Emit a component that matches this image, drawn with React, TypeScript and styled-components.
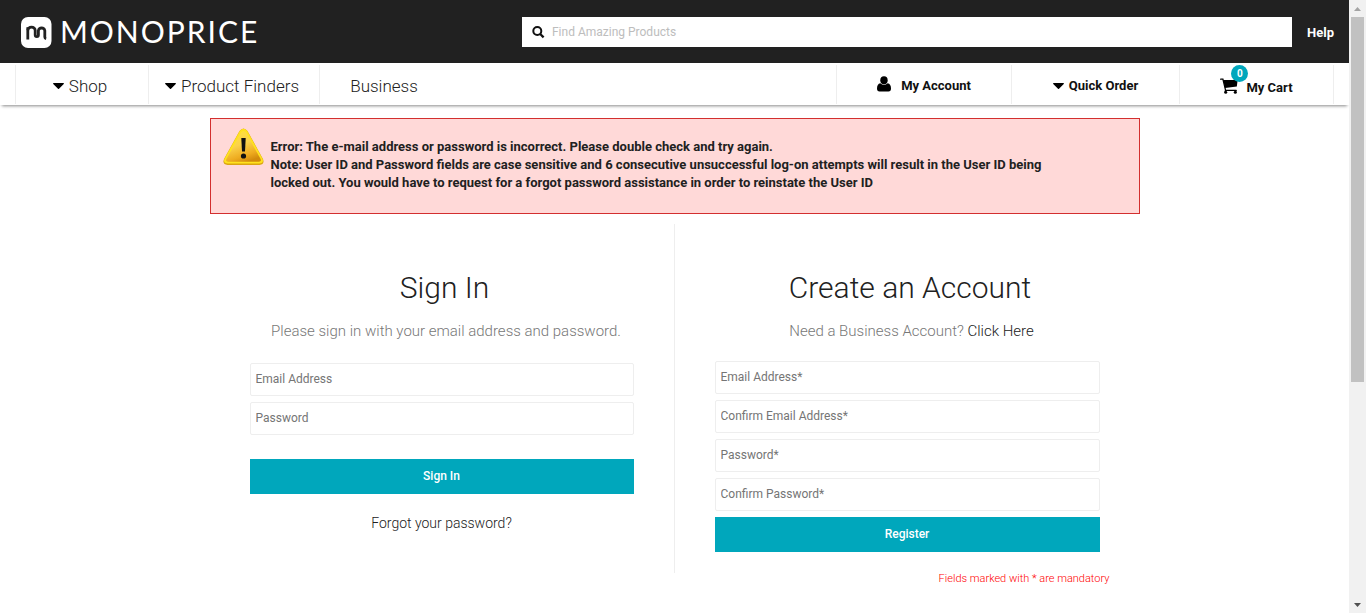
import React from "react";
import styled, { createGlobalStyle } from "styled-components";

const Global = createGlobalStyle`
  *, *::before, *::after { box-sizing: border-box; }
  body {
    margin: 0;
    background: #fff;
    color: #212121;
    font-family: Roboto, "Liberation Sans", sans-serif;
    font-size: 13px;
    line-height: 18px;
  }
  a { color: inherit; text-decoration: none; }
  h1, h2, p { margin: 0; }
`;

const Window = styled.div`
  display: grid;
  grid-template-columns: minmax(0, 1fr) 17px;
  height: 100vh;
  overflow: hidden;
`;

const Page = styled.div`
  min-width: 0;
`;

const TopBar = styled.header`
  display: flex;
  align-items: center;
  gap: 15px;
  height: 63px;
  padding: 0 15px 0 21px;
  background: #212121;
  color: #fff;
`;

const Logo = styled.a`
  display: flex;
  align-items: center;
  gap: 8px;
  margin-right: auto;
  font-family: Lato, sans-serif;
  font-size: 30px;
  line-height: 31px;
  letter-spacing: 2px;
`;

const Search = styled.form`
  display: flex;
  align-items: center;
  gap: 7px;
  flex: 0 0 58.65%;
  height: 30px;
  margin-top: 1px;
  padding-left: 10px;
  background: #fff;
`;

const SearchInput = styled.input`
  flex: 1;
  border: 0;
  outline: 0;
  padding: 0;
  background: transparent;
  font: inherit;
  font-size: 12px;
  color: #212121;
  &::placeholder { color: #bdbdbd; opacity: 1; }
`;

const HelpLink = styled.a`
  padding-top: 2px;
  font-weight: 700;
`;

const Nav = styled.nav`
  display: flex;
  justify-content: space-between;
  height: 42px;
  padding: 2px 15px 1px;
  background: #fff;
  box-shadow: 0 3px 3px -2px #888;
`;

const NavGroup = styled.div`
  display: flex;
`;

const MenuLink = styled.a<{ $w: number }>`
  display: flex;
  align-items: center;
  justify-content: center;
  gap: 5px;
  width: ${(p) => p.$w}px;
  padding: 3px 4px 0 0;
  border-left: 1px solid #eee;
  font-size: 17px;
  font-weight: 300;
`;

const ToolLink = styled(MenuLink)<{ $gap?: number }>`
  gap: ${(p) => p.$gap ?? 5}px;
  padding: 2px 0 0;
  font-size: 13px;
  font-weight: 700;
  color: #111;
  &:last-child { border-right: 1px solid #eee; }
`;

const CartIcon = styled.span`
  position: relative;
  display: flex;
`;

const CartLabel = styled.span`
  padding-top: 4px;
`;

const Badge = styled.span`
  position: absolute;
  top: -13px;
  right: -10px;
  width: 17px;
  height: 17px;
  border-radius: 50%;
  background: #00a7bc;
  color: #fff;
  font-size: 10px;
  line-height: 17px;
  text-align: center;
`;

const Main = styled.main`
  width: 930px;
  max-width: 100%;
  margin: 0 auto;
  padding-top: 13px;
`;

const Alert = styled.section`
  display: flex;
  align-items: flex-start;
  gap: 7px;
  min-height: 96px;
  padding: 9px 80px 8px 12px;
  border: 1px solid #d32f2f;
  background: #ffd9d8;
  font-weight: 700;
  svg { flex-shrink: 0; }
`;

const AlertText = styled.div`
  padding-top: 10px;
`;

const Columns = styled.div`
  display: grid;
  grid-template-columns: 1fr 1fr;
  align-items: start;
  margin-top: 10px;
`;

const Panel = styled.section<{ $divided?: boolean }>`
  min-height: 349px;
  padding: 44px 40px 0;
  border-right: ${(p) => (p.$divided ? "1px solid #eee" : "0")};
`;

const Title = styled.h1`
  padding-left: 6px;
  font-size: 30px;
  line-height: 40px;
  font-weight: 300;
  text-align: center;
`;

const Lead = styled.p`
  margin-top: 12px;
  padding-left: 9px;
  font-size: 15px;
  line-height: 22px;
  font-weight: 300;
  color: #777;
  text-align: center;
  a { color: #212121; }
`;

const Form = styled.form<{ $top: number }>`
  display: flex;
  flex-direction: column;
  gap: 6px;
  margin-top: ${(p) => p.$top}px;
`;

const Field = styled.input`
  height: 33px;
  padding: 0 5px 2px;
  border: 1px solid #eee;
  border-radius: 2px;
  font: inherit;
  font-size: 12px;
  color: #212121;
  &::placeholder { color: #757575; opacity: 1; }
`;

const Submit = styled.button<{ $spaced?: boolean }>`
  height: 35px;
  margin-top: ${(p) => (p.$spaced ? 18 : 0)}px;
  padding: 0 0 2px;
  border: 0;
  background: #00a7bc;
  color: #fff;
  font: inherit;
  font-size: 12px;
  font-weight: 500;
`;

const Forgot = styled.p`
  margin-top: 20px;
  font-size: 14px;
  font-weight: 300;
  text-align: center;
`;

const Mandatory = styled.p`
  margin: 18px -10px 0 0;
  font-size: 11px;
  font-weight: 300;
  color: #f00;
  text-align: right;
`;

const Scrollbar = styled.div`
  display: flex;
  flex-direction: column;
  align-items: center;
  justify-content: space-between;
  background: #f1f1f1;
`;

const ScrollEnd = styled.div`
  display: flex;
  align-items: center;
  justify-content: center;
  height: 17px;
`;

const Track = styled.div`
  flex: 1;
  width: 13px;
`;

const Thumb = styled.div`
  height: 63%;
  background: #c1c1c1;
`;

const Caret = () => (
  <svg width="11" height="6" viewBox="0 0 11 6" aria-hidden="true">
    <path d="M0 .8Q0 0 .8 0h9.4q.8 0 .8.8L6 5.7q-.5.5-1 0z" fill="#000" />
  </svg>
);

const LogoMark = () => (
  <svg width="31" height="33" viewBox="0 -2 31 33" aria-hidden="true">
    <rect width="30.500" height="31" rx="7" fill="#fff" />
    <path
      d="M6.800 22.500V13.500a3.700 3.300 0 0 1 7.400 0V18a1.600 1.600 0 0 0 3.200 0v-4.500a3.300 3.300 0 0 1 6.400 0V20q0 1.300 1.400 1.600"
      fill="none"
      stroke="#212121"
      strokeWidth="2.800"
      strokeLinejoin="round"
    />
    <path d="M5.400 10.200h2.800v3H5.400z" fill="#212121" />
  </svg>
);

const SearchIcon = () => (
  <svg width="13" height="13" viewBox="0 0 13 13" aria-hidden="true">
    <circle cx="5.300" cy="5" r="4" fill="none" stroke="#111" strokeWidth="2" />
    <path d="M8.200 8l3.400 3.400" stroke="#111" strokeWidth="2.300" />
  </svg>
);

const UserIcon = () => (
  <svg width="14" height="20" viewBox="0 0 14 20" aria-hidden="true">
    <ellipse cx="7" cy="4.200" rx="3.700" ry="4" />
    <path d="M3.300 7.200Q7 10.400 10.700 7.200 14 7.800 14 12.600 14 15.500 11.500 15.500h-9Q0 15.500 0 12.600 0 7.800 3.300 7.200z" />
  </svg>
);

const Cart = () => (
  <svg width="18" height="16" viewBox="0 0 18 16" aria-hidden="true">
    <path d="M.6 1.200h2.300l2.700 11.200h10.600" fill="none" stroke="#000" strokeWidth="1.300" strokeLinecap="round" />
    <path d="M3.300 2H17.600L16.800 8.600 5 10z" />
    <path d="M5.200 12.400v2M15.800 12.400v2" stroke="#000" strokeWidth="1" />
    <circle cx="5.700" cy="14.300" r="1.500" />
    <circle cx="15.300" cy="14.300" r="1.500" />
  </svg>
);

const Warning = () => (
  <svg width="41" height="38" viewBox="0 0 41 38" role="img" aria-label="Warning">
    <defs>
      <linearGradient id="gold" x1="0.200" y1="0" x2="0.600" y2="1">
        <stop offset="0" stopColor="#ffe23c" />
        <stop offset="0.450" stopColor="#fbd24b" />
        <stop offset="0.800" stopColor="#eeab1f" />
        <stop offset="1" stopColor="#d28a0c" />
      </linearGradient>
    </defs>
    <path d="M16.500 3Q20.500-2 24.500 3L40 31Q42 36.500 36.500 37H4.500Q-1 36.500 1 31z" fill="#dba510" />
    <path d="M16.700 3Q20.500-1.500 24.300 3L39.600 31Q41 35.500 36 35.500H5Q0 35.500 1.400 31z" fill="#ffe21f" />
    <path d="M18 4.500Q20.500 1.500 23 4.500L37.600 31Q38.500 33.500 36 33.800H5Q2.500 33.500 3.400 31z" fill="url(#gold)" />
    <path d="M18.300 10h4.400l-.7 13.500h-3z" fill="#111" />
    <circle cx="20.500" cy="28" r="2.600" fill="#111" />
  </svg>
);

export default function App() {
  return (
    <Window>
      <Global />
      <Page>
        <TopBar>
          <Logo href="#">
            <LogoMark />
            MONOPRICE
          </Logo>
          <Search>
            <SearchIcon />
            <SearchInput aria-label="Search" placeholder="Find Amazing Products" />
          </Search>
          <HelpLink href="#">Help</HelpLink>
        </TopBar>
        <Nav>
          <NavGroup>
            <MenuLink href="#" $w={133}><Caret />Shop</MenuLink>
            <MenuLink href="#" $w={171}><Caret />Product Finders</MenuLink>
            <MenuLink href="#" $w={133}>Business</MenuLink>
          </NavGroup>
          <NavGroup>
            <ToolLink href="#" $w={175} $gap={10}><UserIcon />My Account</ToolLink>
            <ToolLink href="#" $w={168}><Caret />Quick Order</ToolLink>
            <ToolLink href="#" $w={155} $gap={8}>
              <CartIcon><Cart /><Badge>0</Badge></CartIcon>
              <CartLabel>My Cart</CartLabel>
            </ToolLink>
          </NavGroup>
        </Nav>
        <Main>
          <Alert role="alert">
            <Warning />
            <AlertText>
              <p>Error: The e-mail address or password is incorrect. Please double check and try again.</p>
              <p>
                Note: User ID and Password fields are case sensitive and 6 consecutive unsuccessful log-on attempts will result in the User ID being
                <br />
                locked out. You would have to request for a forgot password assistance in order to reinstate the User ID
              </p>
            </AlertText>
          </Alert>
          <Columns>
            <Panel $divided>
              <Title>Sign In</Title>
              <Lead>Please sign in with your email address and password.</Lead>
              <Form $top={21}>
                <Field type="email" aria-label="Email Address" placeholder="Email Address" />
                <Field type="password" aria-label="Password" placeholder="Password" />
                <Submit type="button" $spaced>Sign In</Submit>
              </Form>
              <Forgot><a href="#">Forgot your password?</a></Forgot>
            </Panel>
            <Panel>
              <Title as="h2">Create an Account</Title>
              <Lead>Need a Business Account? <a href="#">Click Here</a></Lead>
              <Form $top={19}>
                <Field type="email" aria-label="Email Address" placeholder="Email Address*" />
                <Field type="email" aria-label="Confirm Email Address" placeholder="Confirm Email Address*" />
                <Field type="password" aria-label="Password" placeholder="Password*" />
                <Field type="password" aria-label="Confirm Password" placeholder="Confirm Password*" />
                <Submit type="button">Register</Submit>
              </Form>
              <Mandatory>Fields marked with * are mandatory</Mandatory>
            </Panel>
          </Columns>
        </Main>
      </Page>
      <Scrollbar aria-hidden="true">
        <ScrollEnd>
          <svg width="7" height="4" viewBox="0 0 7 4"><path d="M0 4L3.500 0 7 4z" fill="#a3a3a3" /></svg>
        </ScrollEnd>
        <Track><Thumb /></Track>
        <ScrollEnd>
          <svg width="7" height="4" viewBox="0 0 7 4"><path d="M0 0h7L3.500 4z" fill="#505050" /></svg>
        </ScrollEnd>
      </Scrollbar>
    </Window>
  );
}
